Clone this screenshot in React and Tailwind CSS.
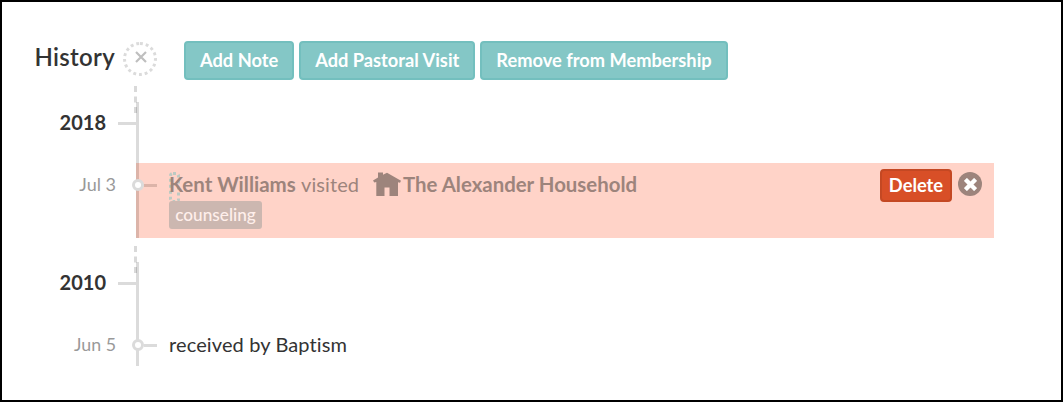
import React from "react";

const actions = ["Add Note", "Add Pastoral Visit", "Remove from Membership"];

function YearRow({ year, className, tick }) {
  return (
    <div className={`flex ${className}`}>
      <div className="w-[104px] pt-[5px] text-right text-[20px] leading-[30px] font-bold">
        {year}
      </div>
      <div className={`ml-3 h-[3px] w-[18px] bg-[#dbdbdb] ${tick}`} />
      <div className="relative w-[3px] bg-[#dbdbdb]">
        {/* dashed connector overlaps the start of the rail */}
        <div className="absolute -top-4 -left-0.5 h-[27px] border-l-3 border-dashed border-black/15" />
      </div>
    </div>
  );
}

function Marker({ line }) {
  return (
    <>
      <div className="absolute top-4 -left-1 size-3 rounded-full border-3 border-[#dbdbdb] bg-white" />
      <div className={`absolute top-[21px] left-2 h-[3px] w-[13px] ${line}`} />
    </>
  );
}

function House() {
  return (
    <svg width="28" height="24" viewBox="0 0 28 24" fill="#9d847c" className="-mt-0.5">
      <path d="M0 8.5 5 5.5V.5h5v2.3L14 .8 28 8.8l-1 2-2-.6V24h-8.5v-8.5h-5V24H3.3V10l-2 .6Z" />
    </svg>
  );
}

export default function App() {
  return (
    <div className="h-[402px] w-[1063px] overflow-hidden border-2 border-black bg-white font-['Lato',sans-serif] text-[20px] text-[#333] [font-variant-ligatures:none]">
      <div className="flex h-[98px] pt-[39px]">
        <h1 className="w-[113px] text-right text-[24px] leading-[32px] font-semibold tracking-[0.3px]">
          History
        </h1>
        <button className="ml-2 flex size-[34px] mt-px items-center justify-center rounded-full border-3 border-dotted border-[#dbdbdb]">
          <svg width="12" height="12" viewBox="0 0 12 12" stroke="#bfbfbf" strokeWidth="2.2" className="ml-0.5 -mt-1">
            <path d="m1 1 10 10M11 1 1 11" />
          </svg>
        </button>
        <div className="ml-[27px] flex h-[39px] gap-[5px]">
          {actions.map((label) => (
            <button
              key={label}
              className="rounded border-2 border-[#73bfbe] bg-[#84c7c6] px-[14px] text-[18.25px] font-bold whitespace-nowrap text-white"
            >
              {label}
            </button>
          ))}
        </div>
      </div>

      <YearRow year="2018" className="mt-0.5 h-[61px]" tick="mt-5" />

      <div className="flex h-[75px]">
        <div className="w-[114px] pt-[7px] text-right text-[18px] leading-[28px] text-[#999]">
          Jul 3
        </div>
        <div className="relative ml-5 flex w-[858px] bg-[#ffd3c8] text-[#9d847c]">
          <div className="w-[3px] bg-[#dcb4a9]" />
          <Marker line="bg-[#dcb4a9]" />
          <div className="relative ml-[30px] flex-1 pt-[7px]">
            <span className="absolute top-[9px] left-0 h-[31px] w-[11px] rounded-[4px] border-3 border-dotted border-[#bccac3]" />
            <div className="relative flex h-[30px] items-center">
              <b className="-mt-0.5 w-[128px] text-[20.5px] whitespace-nowrap">Kent Williams</b>
              <span className="-mt-0.5 ml-1 w-[58px] tracking-[0.1px]">visited</span>
              <span className="ml-[14px] mr-0.5">
                <House />
              </span>
              <b className="-mt-0.5 text-[20.4px]">The Alexander Household</b>
            </div>
            <span className="relative mt-px flex h-7 w-[93px] items-center justify-center rounded-[3px] bg-[#ccb7b0] text-[17.2px] font-medium text-[#ffefeb]">
              counseling
            </span>
          </div>
          <button className="mt-1.5 h-[33px] w-[72px] rounded border-2 border-[#c44823] bg-[#d84f27] text-[18.3px] font-bold text-white">
            Delete
          </button>
          <button className="mt-[9px] mr-3 ml-1.5 flex size-6 items-center justify-center rounded-full bg-[#9d847c]">
            <svg width="13" height="13" viewBox="0 0 14 14" stroke="white" strokeWidth="4.6">
              <path d="m1.5 1.5 11 11M12.5 1.5l-11 11" />
            </svg>
          </button>
        </div>
      </div>

      <YearRow year="2010" className="mt-6 h-[61px]" tick="mt-5" />

      <div className="flex h-[43px]">
        <div className="w-[114px] pt-[7px] text-right text-[17.8px] leading-[28px] text-[#999]">
          Jun 5
        </div>
        <div className="relative ml-5 flex">
          <div className="w-[3px] bg-[#dbdbdb]" />
          <Marker line="bg-[#dbdbdb]" />
          <div className="ml-[30px] pt-1.5 leading-[30px] tracking-[0.12px]">received by Baptism</div>
        </div>
      </div>
    </div>
  );
}
